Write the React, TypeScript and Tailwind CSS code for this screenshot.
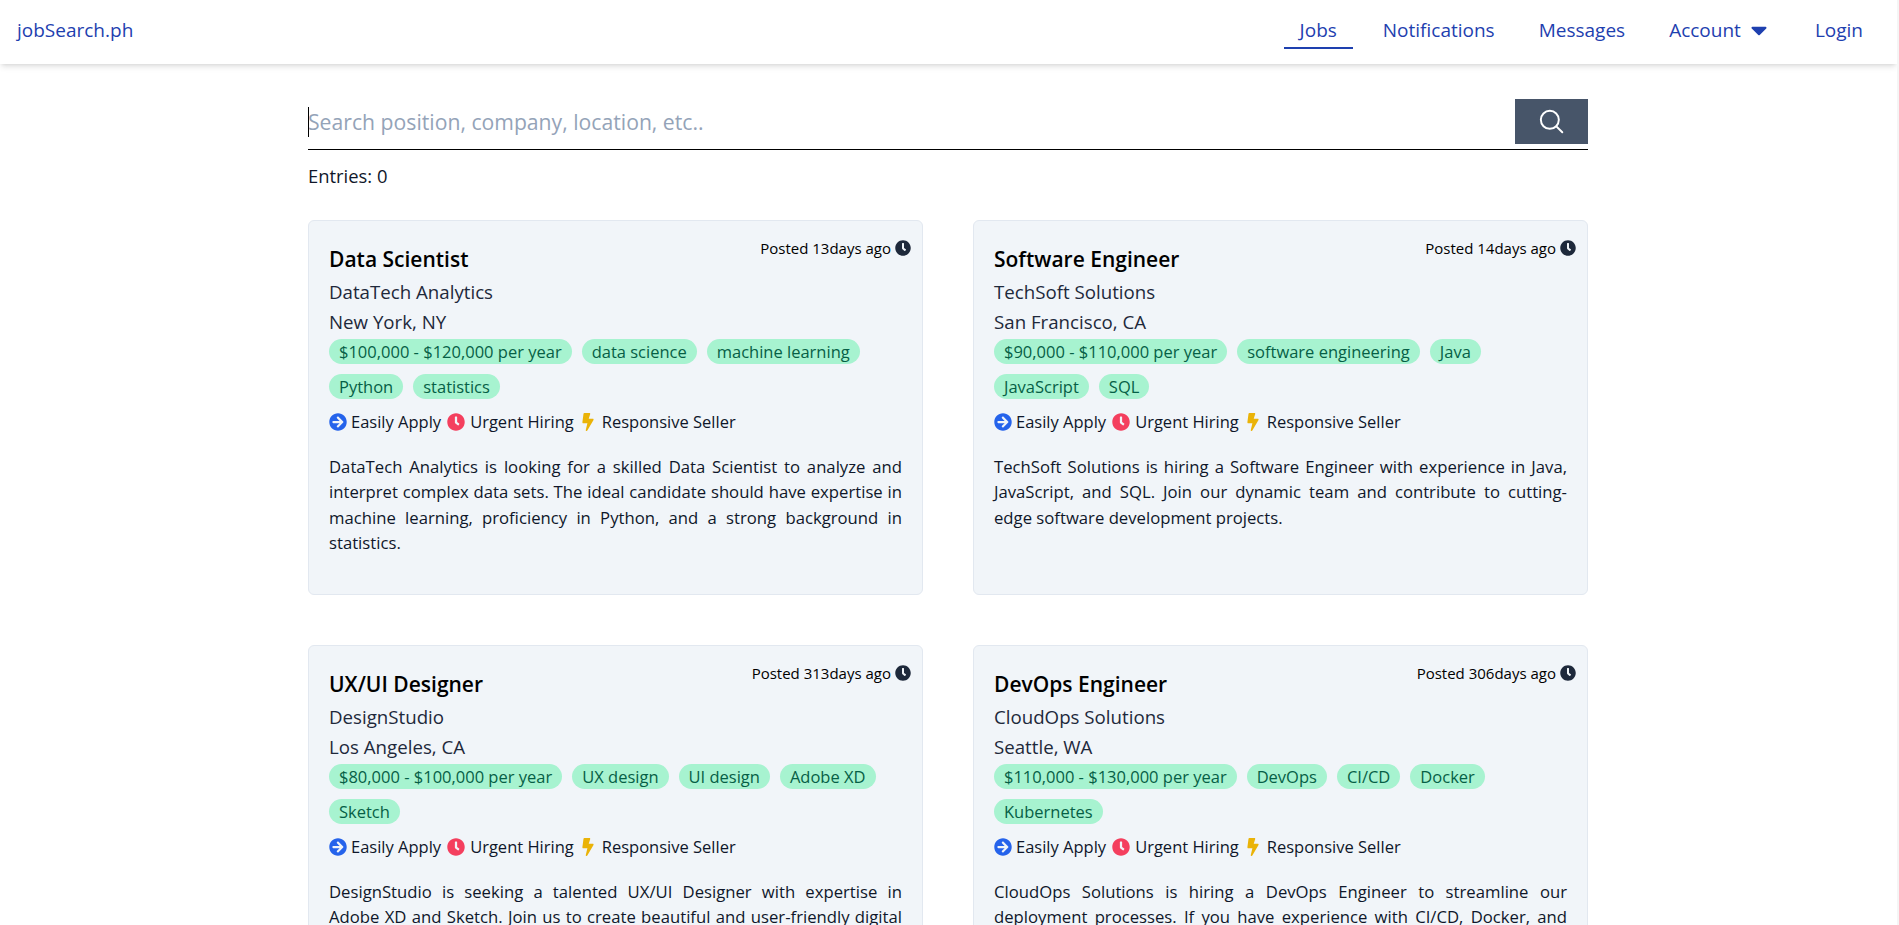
import { FaArrowCircleRight, FaBolt, FaCaretDown, FaClock } from "react-icons/fa";

interface IJob {
  title: string;
  company: string;
  location: string;
  posted: string;
  tags: string[];
  description: string;
}

const jobs: IJob[] = [
  {
    title: "Data Scientist",
    company: "DataTech Analytics",
    location: "New York, NY",
    posted: "13days",
    tags: ["$100,000 - $120,000 per year", "data science", "machine learning", "Python", "statistics"],
    description:
      "DataTech Analytics is looking for a skilled Data Scientist to analyze and interpret complex data sets. The ideal candidate should have expertise in machine learning, proficiency in Python, and a strong background in statistics.",
  },
  {
    title: "Software Engineer",
    company: "TechSoft Solutions",
    location: "San Francisco, CA",
    posted: "14days",
    tags: ["$90,000 - $110,000 per year", "software engineering", "Java", "JavaScript", "SQL"],
    description:
      "TechSoft Solutions is hiring a Software Engineer with experience in Java, JavaScript, and SQL. Join our dynamic team and contribute to cutting-edge software development projects.",
  },
  {
    title: "UX/UI Designer",
    company: "DesignStudio",
    location: "Los Angeles, CA",
    posted: "313days",
    tags: ["$80,000 - $100,000 per year", "UX design", "UI design", "Adobe XD", "Sketch"],
    description:
      "DesignStudio is seeking a talented UX/UI Designer with expertise in Adobe XD and Sketch. Join us to create beautiful and user-friendly digital experiences for our clients.",
  },
  {
    title: "DevOps Engineer",
    company: "CloudOps Solutions",
    location: "Seattle, WA",
    posted: "306days",
    tags: ["$110,000 - $130,000 per year", "DevOps", "CI/CD", "Docker", "Kubernetes"],
    description:
      "CloudOps Solutions is hiring a DevOps Engineer to streamline our deployment processes. If you have experience with CI/CD, Docker, and Kubernetes, we want to hear from you.",
  },
];

const JobCard = ({ job }: { job: IJob }) => {
  return (
    <div className="relative h-[375px] rounded-md border border-[#e2e8f0] bg-[#f1f5f9] px-5 pt-[21px]">
      <div className="absolute right-[11px] top-[16px] flex items-center gap-1 text-[15px] text-black">
        <span>Posted {job.posted} ago</span>
        <FaClock className="text-[16px] text-[#1e293b]" />
      </div>
      <h2 className="text-[21px] leading-[35px] font-semibold text-black">{job.title}</h2>
      <p className="text-[18.7px] leading-[30px] text-[#1e293b]">{job.company}</p>
      <p className="text-[18.7px] leading-[30px] text-[#1e293b]">{job.location}</p>
      <div className="mt-[2px] flex flex-wrap gap-[10px]">
        {job.tags.map((tag) => (
          <span key={tag} className="h-[25px] rounded-full bg-[#a7f3d0] px-[10px] text-[16.5px] leading-[25px] text-[#065f46]">
            {tag}
          </span>
        ))}
      </div>
      <div className="mt-[11px] flex h-6 items-center text-[16.5px] text-[#0f172a]">
        <FaArrowCircleRight className="mr-[4px] text-lg text-[#2563eb]" />
        <span className="mr-[6px]">Easily Apply</span>
        <FaClock className="mr-[5px] text-lg text-[#f43f5e]" />
        <span className="mr-[5px]">Urgent Hiring</span>
        <FaBolt className="mr-[5px] text-lg text-[#eab308]" />
        <span>Responsive Seller</span>
      </div>
      <p className="mt-[20px] text-justify text-[16.7px] leading-[25.3px] text-[#0f172a]">{job.description}</p>
    </div>
  );
};

const App = () => {
  return (
    <div className="flex h-screen overflow-hidden bg-white font-['Open_Sans',sans-serif]">
      <div className="min-w-0 flex-1">
        <nav className="flex h-16 items-center justify-between bg-white pl-[17px] pr-5 text-[19px] text-[#1e40af] shadow-md">
          <a className="mb-1">jobSearch.ph</a>
          <ul className="flex gap-4">
            <li className="h-[34px] border-b-2 border-[#1e40af] px-4 leading-[30px]">Jobs</li>
            <li className="px-[14px] leading-[30px]">Notifications</li>
            <li className="px-[14px] leading-[30px]">Messages</li>
            <li className="flex h-[30px] items-center gap-[5px] pl-[14px] pr-4 leading-[30px]">
              Account <FaCaretDown className="text-[26px]" />
            </li>
            <li className="pl-[11px] pr-[14px] leading-[30px]">Login</li>
          </ul>
        </nav>
        <main className="ml-[308px] w-[1280px]">
          <div className="mt-[35px] flex h-[51px] border-b border-black">
            <div className="relative flex h-[45px] flex-1 items-center">
              <span className="absolute left-0 top-[8px] h-[30px] w-px bg-black" />
              <span className="text-[21.2px] text-[#94a3b8]">Search position, company, location, etc..</span>
            </div>
            <button className="flex h-[45px] w-[73px] items-center justify-center bg-[#475569]">
              <svg width="26" height="26" viewBox="0 0 24 24" fill="none" stroke="white" strokeWidth="1.8" strokeLinecap="round">
                <circle cx="10" cy="10" r="8.3" />
                <path d="M16 16l5.5 5.5" />
              </svg>
            </button>
          </div>
          <p className="mt-[12px] text-[18.4px] leading-7 text-[#0f172a]">Entries: 0</p>
          <div className="mt-[30px] grid grid-cols-2 gap-[50px]">
            {jobs.map((job) => (
              <JobCard key={job.title} job={job} />
            ))}
          </div>
        </main>
      </div>
      <div className="w-[2px] shrink-0 bg-[#f5f5f5]" />
    </div>
  );
};

export default App;
